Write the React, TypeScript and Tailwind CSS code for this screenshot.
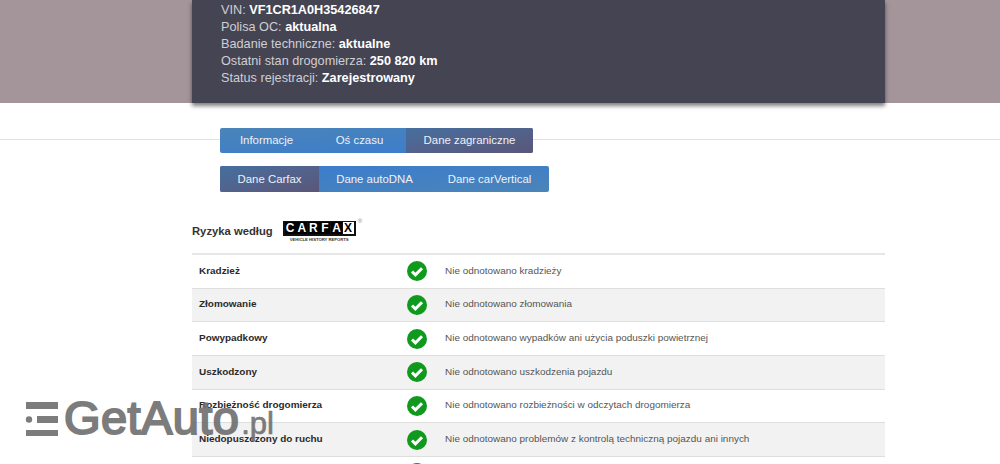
const rows = [
  ["Kradzież", "Nie odnotowano kradzieży"],
  ["Złomowanie", "Nie odnotowano złomowania"],
  ["Powypadkowy", "Nie odnotowano wypadków ani użycia poduszki powietrznej"],
  ["Uszkodzony", "Nie odnotowano uszkodzenia pojazdu"],
  ["Rozbieżność drogomierza", "Nie odnotowano rozbieżności w odczytach drogomierza"],
  ["Niedopuszczony do ruchu", "Nie odnotowano problemów z kontrolą techniczną pojazdu ani innych"],
  ["", ""],
];

const info = [
  ["VIN:", "VF1CR1A0H35426847"],
  ["Polisa OC:", "aktualna"],
  ["Badanie techniczne:", "aktualne"],
  ["Ostatni stan drogomierza:", "250 820 km"],
  ["Status rejestracji:", "Zarejestrowany"],
];

const Check = () => (
  <svg width="20" height="20" viewBox="0 0 20 20">
    <circle cx="10" cy="10" r="10" fill="#0f9a1e" />
    <path d="M5 10.5l3.4 3.4L15 7.2" fill="none" stroke="#fff" strokeWidth="3" />
  </svg>
);

const Tab = ({ label, active, className }: { label: string; active?: boolean; className: string }) => (
  <div
    className={`flex h-full items-center justify-center pt-[1px] text-[11.4px] text-[#eef2f8] ${className} ${
      active ? "bg-gradient-to-br from-[#456f9f] to-[#5a5679]" : ""
    }`}
  >
    {label}
  </div>
);

const Carfax = () => (
  <div className="ml-[10px] flex flex-col items-center">
    <div className="flex h-[15px] w-[73px] items-center justify-between bg-[#111] px-[2px]">
      {["C", "A", "R", "F", "A", "X"].map((c, i) => (
        <span
          key={i}
          className={`flex h-[12px] w-[11px] items-center justify-center text-[12px] leading-none font-bold ${
            i === 5 ? "bg-white text-black" : "bg-black text-white"
          }`}
        >
          {c}
        </span>
      ))}
    </div>
    <div className="mt-[1px] text-[4.2px] leading-[5px] font-bold whitespace-nowrap text-[#333]">
      VEHICLE HISTORY REPORTS
    </div>
  </div>
);

export default function App() {
  return (
    <div className="relative h-[464px] w-[1000px] overflow-hidden bg-white font-['Liberation_Sans',Arial,sans-serif]">
      <div className="h-[103px] bg-[#a39599]">
        <div className="ml-[192px] h-[103px] w-[693px] bg-[#454453] pl-[29px] text-[12.7px] leading-[17px] text-[#cfcfd4] shadow-[0_3px_4px_rgba(0,0,0,0.5)]">
          {info.map(([k, v], i) => (
            <div key={k} className={i === 0 ? "pt-[2px]" : ""}>
              {k} <b className="font-bold text-white">{v}</b>
            </div>
          ))}
        </div>
      </div>

      <div className="relative mt-[25px] pl-[220px]">
        <div className="absolute top-[11px] right-0 left-0 h-px bg-[#e2e2e2]" />
        <div className="relative flex h-[25px] w-[313px] overflow-hidden rounded-[2px] bg-gradient-to-br from-[#4a84b8] to-[#3a7bd0]">
          <Tab label="Informacje" className="w-[93px]" />
          <Tab label="Oś czasu" className="w-[93px]" />
          <Tab label="Dane zagraniczne" active className="w-[127px]" />
        </div>
      </div>

      <div className="mt-[13px] ml-[220px] flex h-[26px] w-[329px] overflow-hidden rounded-[2px] bg-gradient-to-br from-[#3a7bd0] to-[#4a84b8]">
        <Tab label="Dane Carfax" active className="w-[99px]" />
        <Tab label="Dane autoDNA" className="w-[111px]" />
        <Tab label="Dane carVertical" className="w-[119px]" />
      </div>

      <div className="ml-[192px] flex h-[61px] w-[693px] items-center pt-[17px] font-bold text-[#333]">
        <span className="text-[11.25px]">Ryzyka według</span>
        <Carfax />
        <span className="mb-[20px] ml-[2px] text-[6px] font-normal text-[#888]">®</span>
      </div>

      <div className="ml-[192px] w-[693px] border-t-2 border-[#e6e6e6]">
        {rows.map(([name, text], i) => (
          <div
            key={i}
            className={`flex h-[33.7px] items-center border-b border-[#dedede] text-[9.95px] ${
              i % 2 === 1 ? "bg-[#f2f2f2]" : "bg-white"
            }`}
          >
            <div className="w-[215px] pb-[0.5px] pl-[7px] font-bold text-[#2a2a2a]">{name}</div>
            <div className="flex w-[38px] justify-start">
              <Check />
            </div>
            <div className="pb-[0.5px] text-[#555]">{text}</div>
          </div>
        ))}
      </div>

      <div className="absolute top-[390px] left-[25px] flex items-baseline text-[#6e6e6e] opacity-90">
        <svg width="33" height="34" viewBox="0 0 33 34" fill="#6e6e6e" className="mb-[16px] self-end">
          <rect x="1" y="0" width="32" height="7" />
          <circle cx="4" cy="17.5" r="3.2" />
          <rect x="12" y="14" width="21" height="7" />
          <rect x="1" y="28" width="32" height="6" />
        </svg>
        <span className="ml-[6px] text-[47px] leading-[56px] tracking-[0.4px] [-webkit-text-stroke:2px_#6e6e6e]">
          GetAuto
        </span>
        <span className="ml-[2px] text-[31px] leading-[56px] [-webkit-text-stroke:0.7px_#6e6e6e]">.pl</span>
      </div>
    </div>
  );
}
